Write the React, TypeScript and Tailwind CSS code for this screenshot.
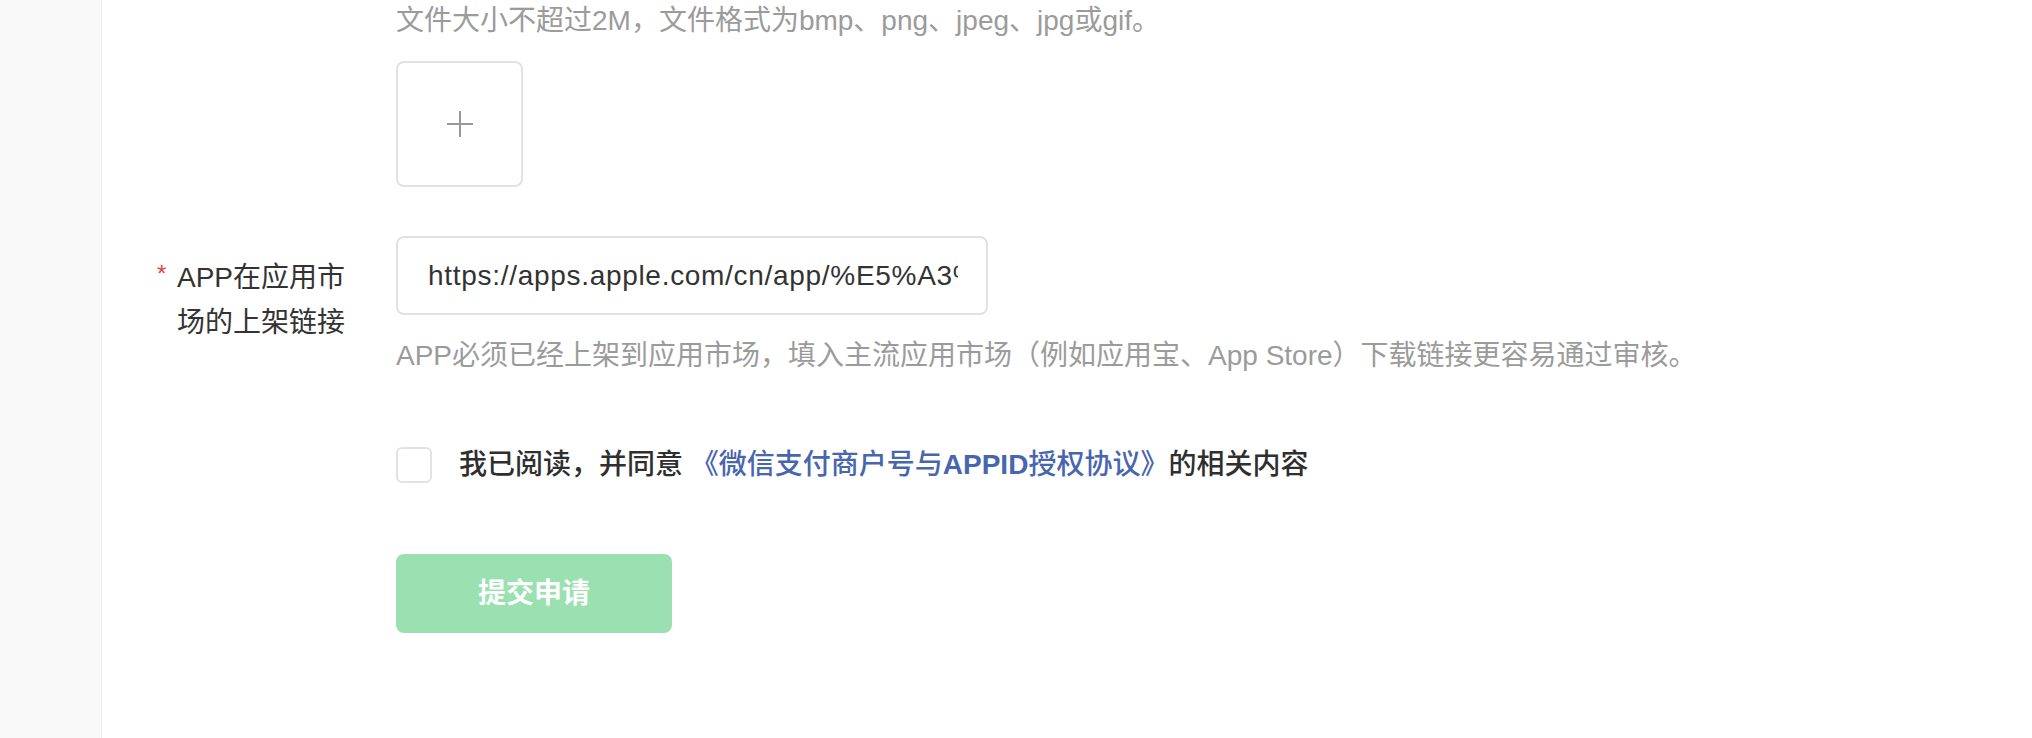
import React, { useState } from 'react';

const FONT = "font-['Liberation_Sans','Noto_Sans_CJK_SC',sans-serif]";

const PlusIcon: React.FC = () => (
  <svg width="26" height="26" viewBox="0 0 26 26" fill="none">
    <line x1="13" y1="0" x2="13" y2="26" stroke="#999999" strokeWidth="2" />
    <line x1="0" y1="13" x2="26" y2="13" stroke="#999999" strokeWidth="2" />
  </svg>
);

const App: React.FC = () => {
  const [agreed, setAgreed] = useState(false);
  const [url, setUrl] = useState('https://apps.apple.com/cn/app/%E5%A3%9B%E5%8F%B7%E5%BA%97/id1234567890');

  return (
    <div className={`flex w-full h-screen bg-white overflow-hidden ${FONT}`}>
      {/* --- Left sidebar --- */}
      <div className="w-[102px] shrink-0 bg-[#f9f9f9] border-r border-[#f1f1f1]"></div>

      {/* --- Form area --- */}
      <div className="flex-1 flex flex-col">
        {/* Upload */}
        <div className="pl-[294px] pt-[3px]">
          <p className="text-[28px] leading-[36px] text-[#9b9b9b] whitespace-nowrap">
            文件大小不超过2M，文件格式为bmp、png、jpeg、jpg或gif。
          </p>
          <button className="mt-[22px] w-[127px] h-[126px] border-2 border-[#e2e2e2] rounded-[8px] flex items-center justify-center bg-white">
            <PlusIcon />
          </button>
        </div>

        {/* App market link */}
        <div className="mt-[49px] flex">
          <div className="w-[294px] shrink-0 flex pl-[55px] pt-[19px]">
            <span className="w-[20px] mt-[4px] text-[24px] leading-[30px] text-[#e64340]">*</span>
            <label className="w-[172px] text-[28px] leading-[45px] text-[#333333]">APP在应用市场的上架链接</label>
          </div>
          <div className="flex flex-col">
            <input
              value={url}
              onChange={(e) => setUrl(e.target.value)}
              className="w-[592px] h-[79px] border-2 border-[#e2e2e2] rounded-[8px] pl-[30px] pr-[28px] text-[28px] tracking-[0.7px] text-[#333333] outline-none"
            />
            <p className="mt-[21px] text-[28px] leading-[40px] text-[#9b9b9b] whitespace-nowrap">
              APP必须已经上架到应用市场，填入主流应用市场（例如应用宝、App Store）下载链接更容易通过审核。
            </p>
          </div>
        </div>

        {/* Agreement */}
        <div className="pl-[294px] mt-[69px] flex items-center">
          <button
            onClick={() => setAgreed(!agreed)}
            className="w-[36px] h-[36px] border-2 border-[#e2e2e2] rounded-[6px] bg-white shrink-0"
          ></button>
          <p className="ml-[27px] text-[28px] leading-[40px] font-medium text-[#2f2f2f] whitespace-nowrap">
            我已阅读，并同意 <a className="text-[#4866ad]">《微信支付商户号与<span className="font-semibold">APPID</span>授权协议》</a>的相关内容
          </p>
        </div>

        {/* Submit */}
        <div className="pl-[294px] mt-[69px]">
          <button
            disabled={!agreed}
            className="w-[276px] h-[79px] rounded-[8px] bg-[#9ae0b0] text-white text-[28px] font-bold"
          >
            提交申请
          </button>
        </div>
      </div>
    </div>
  );
};

export default App;
